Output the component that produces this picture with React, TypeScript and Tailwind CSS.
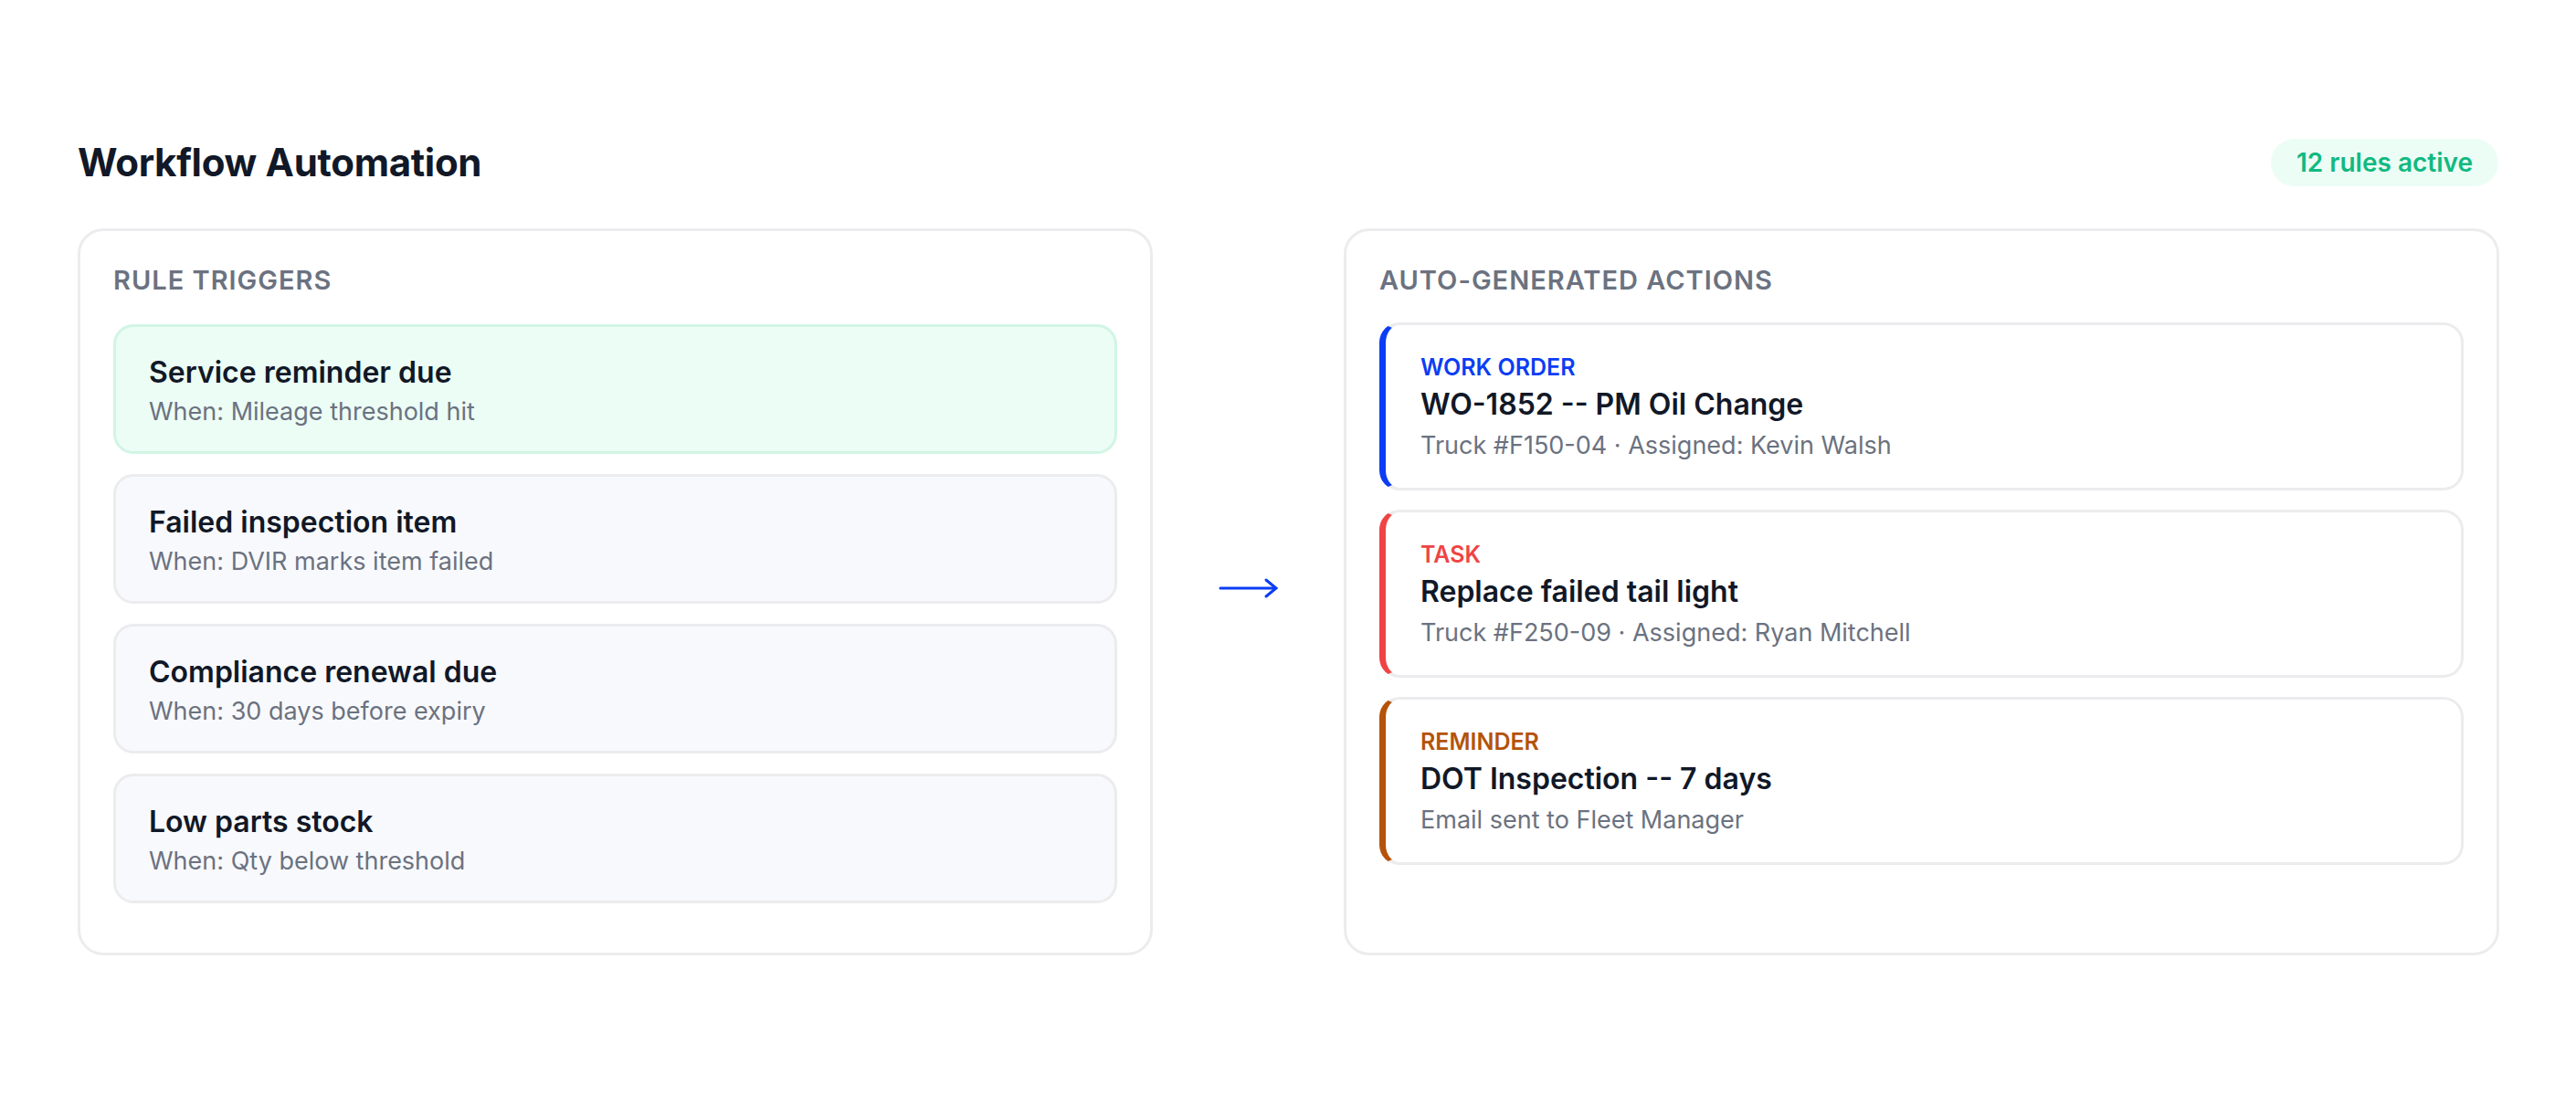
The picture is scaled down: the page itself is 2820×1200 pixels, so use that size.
const triggers = [
  { title: 'Service reminder due', when: 'When: Mileage threshold hit', active: true },
  { title: 'Failed inspection item', when: 'When: DVIR marks item failed' },
  { title: 'Compliance renewal due', when: 'When: 30 days before expiry' },
  { title: 'Low parts stock', when: 'When: Qty below threshold' },
];

const actions = [
  { kind: 'WORK ORDER', title: 'WO-1852 -- PM Oil Change', meta: 'Truck #F150-04 · Assigned: Kevin Walsh', bar: 'border-l-[#0b3df5]', text: 'text-[#0b3df5]' },
  { kind: 'TASK', title: 'Replace failed tail light', meta: 'Truck #F250-09 · Assigned: Ryan Mitchell', bar: 'border-l-[#ef4444]', text: 'text-[#ef4444]' },
  { kind: 'REMINDER', title: 'DOT Inspection -- 7 days', meta: 'Email sent to Fleet Manager', bar: 'border-l-[#b45309]', text: 'text-[#b45309]' },
];

export default function App() {
  return (
    <div className="min-h-[1200px] bg-white px-[85px] pt-[150px] font-[Inter,sans-serif] text-[#111827]">
      {/* Header */}
      <div className="flex items-center justify-between">
        <h1 className="text-[42px] leading-[56px] font-bold tracking-[-0.3px]">Workflow Automation</h1>
        <span className="flex h-[52px] items-center rounded-full bg-[#ecfdf5] px-[28px] text-[28px] font-semibold text-[#10b981]">
          12 rules active
        </span>
      </div>

      <div className="mt-[44px] grid grid-cols-[1177px_209px_1265px]">
        {/* Triggers */}
        <div className="rounded-[28px] border-[3px] border-[#ececef] px-[36px] pt-[36px] pb-[54px]">
          <div className="text-[29px] leading-[36px] font-semibold tracking-[1px] text-[#6b7280]">RULE TRIGGERS</div>
          <div className="mt-[30px] flex flex-col gap-[22px]">
            {triggers.map((t) => (
              <div
                key={t.title}
                className={`h-[142px] rounded-[22px] border-[3px] px-[36px] pt-[30px] ${
                  t.active ? 'border-[#d1f5e4] bg-[#ecfdf5]' : 'border-[#ececef] bg-[#f8f9fc]'
                }`}
              >
                <div className="text-[32px] leading-[40px] font-semibold">{t.title}</div>
                <div className="mt-[5px] text-[27px] leading-[36px] text-[#6b7280]">{t.when}</div>
              </div>
            ))}
          </div>
        </div>

        {/* Arrow */}
        <div className="flex items-center justify-center pb-[8px]">
          <svg width="66" height="24" viewBox="0 0 66 24" fill="none" stroke="#0b3df5" strokeWidth="3" strokeLinecap="round">
            <path d="M2 12H62" />
            <path d="M52 3L63 12L52 21" />
          </svg>
        </div>

        {/* Actions */}
        <div className="rounded-[28px] border-[3px] border-[#ececef] px-[36px] pt-[36px] pb-[54px]">
          <div className="text-[29px] leading-[36px] font-semibold tracking-[1px] text-[#6b7280]">AUTO-GENERATED ACTIONS</div>
          <div className="mt-[28px] flex flex-col gap-[21px]">
            {actions.map((a) => (
              <div
                key={a.kind}
                className={`h-[184px] rounded-[22px] border-[3px] border-l-[7px] border-[#ececef] ${a.bar} pl-[38px] pt-[30px]`}
              >
                <div className={`text-[25px] leading-[32px] font-semibold ${a.text}`}>{a.kind}</div>
                <div className="mt-[5px] text-[32px] leading-[40px] font-semibold">{a.title}</div>
                <div className="mt-[7px] text-[27px] leading-[36px] text-[#6b7280]">{a.meta}</div>
              </div>
            ))}
          </div>
        </div>
      </div>
    </div>
  );
}
